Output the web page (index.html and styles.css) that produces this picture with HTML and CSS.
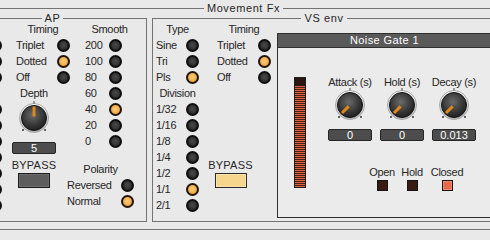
FILE: index.html
```html
<!DOCTYPE html>
<html lang="en">
<head>
    <meta charset="UTF-8">
    <title>Movement Fx</title>
    <link rel="stylesheet" href="styles.css">
</head>
<body>
    <fieldset class="group outer">
        <legend>Movement Fx</legend>
        <div class="fx-row">

            <!-- AP (its first column is scrolled off the left edge) -->
            <fieldset class="group ap">
                <legend>AP</legend>
                <div class="cols">
                    <div class="col col-type">
                        <div class="head"></div>
                        <div class="opt"><span></span><i class="led"></i></div>
                        <div class="opt"><span></span><i class="led"></i></div>
                        <div class="opt"><span></span><i class="led"></i></div>
                        <div class="head"></div>
                        <div class="opt"><span></span><i class="led"></i></div>
                        <div class="opt"><span></span><i class="led"></i></div>
                        <div class="opt"><span></span><i class="led"></i></div>
                        <div class="opt"><span></span><i class="led"></i></div>
                        <div class="opt"><span></span><i class="led"></i></div>
                        <div class="opt"><span></span><i class="led"></i></div>
                        <div class="opt"><span></span><i class="led"></i></div>
                    </div>
                    <div class="col col-timing ap-timing">
                        <div class="opts">
                            <div class="head">Timing</div>
                            <div class="opt"><span>Triplet</span><i class="led"></i></div>
                            <div class="opt"><span>Dotted</span><i class="led on"></i></div>
                            <div class="opt"><span>Off</span><i class="led"></i></div>
                        </div>
                        <div class="depth">
                            <div class="head">Depth</div>
                            <svg class="knob" viewBox="0 0 34 34" width="34" height="34">
                                <defs>
                                    <radialGradient id="knobBody" cx="45%" cy="38%" r="65%">
                                        <stop offset="0" stop-color="#6b6b6b"/>
                                        <stop offset="0.6" stop-color="#393939"/>
                                        <stop offset="1" stop-color="#1c1c1c"/>
                                    </radialGradient>
                                    <linearGradient id="knobRing" x1="0" y1="0" x2="0" y2="1">
                                        <stop offset="0" stop-color="#fdfdfd"/>
                                        <stop offset="1" stop-color="#b4b4b4"/>
                                    </linearGradient>
                                </defs>
                                <circle cx="17" cy="17" r="14.5" fill="url(#knobRing)" stroke="#a8a8a8"/>
                                <circle cx="17" cy="17" r="12.5" fill="url(#knobBody)" stroke="#141414"/>
                                <line x1="17" y1="0" x2="17" y2="2.5" stroke="#444"/>
                                <circle cx="6" cy="29" r="1" fill="#333"/>
                                <circle cx="28" cy="29" r="1" fill="#333"/>
                                <line x1="17" y1="15.5" x2="17" y2="5.5" stroke="#e0871c" stroke-width="3"/>
                            </svg>
                            <div class="value">5</div>
                            <div class="bypass-label">BYPASS</div>
                            <div class="bypass"></div>
                        </div>
                    </div>
                    <div class="col col-smooth">
                        <div class="head">Smooth</div>
                        <div class="opt"><span>200</span><i class="led"></i></div>
                        <div class="opt"><span>100</span><i class="led"></i></div>
                        <div class="opt"><span>80</span><i class="led"></i></div>
                        <div class="opt"><span>60</span><i class="led"></i></div>
                        <div class="opt"><span>40</span><i class="led on"></i></div>
                        <div class="opt"><span>20</span><i class="led"></i></div>
                        <div class="opt"><span>0</span><i class="led"></i></div>
                        <div class="polarity">
                            <div class="head">Polarity</div>
                            <div class="opt"><span>Reversed</span><i class="led"></i></div>
                            <div class="opt"><span>Normal</span><i class="led on"></i></div>
                        </div>
                    </div>
                </div>
            </fieldset>

            <!-- VS env -->
            <fieldset class="group vs">
                <legend>VS env</legend>
                <div class="vs-row">
                    <div class="cols">
                        <div class="col col-type">
                            <div class="head">Type</div>
                            <div class="opt"><span>Sine</span><i class="led"></i></div>
                            <div class="opt"><span>Tri</span><i class="led"></i></div>
                            <div class="opt"><span>Pls</span><i class="led on"></i></div>
                            <div class="head">Division</div>
                            <div class="opt"><span>1/32</span><i class="led"></i></div>
                            <div class="opt"><span>1/16</span><i class="led"></i></div>
                            <div class="opt"><span>1/8</span><i class="led"></i></div>
                            <div class="opt"><span>1/4</span><i class="led"></i></div>
                            <div class="opt"><span>1/2</span><i class="led"></i></div>
                            <div class="opt"><span>1/1</span><i class="led on"></i></div>
                            <div class="opt"><span>2/1</span><i class="led"></i></div>
                        </div>
                        <div class="col col-timing vs-timing">
                            <div class="opts">
                                <div class="head">Timing</div>
                                <div class="opt"><span>Triplet</span><i class="led"></i></div>
                                <div class="opt"><span>Dotted</span><i class="led on"></i></div>
                                <div class="opt"><span>Off</span><i class="led"></i></div>
                            </div>
                            <div class="vs-bypass">
                                <div class="bypass-label">BYPASS</div>
                                <div class="bypass on"></div>
                            </div>
                        </div>
                    </div>

                    <div class="gate">
                        <div class="gate-title">Noise Gate 1</div>
                        <div class="gate-body">
                            <div class="meter"></div>
                            <div class="gate-controls">
                                <div class="knobs">
                                    <div class="knob-cell">
                                        <div class="knob-label">Attack (s)</div>
                                        <svg class="knob" viewBox="0 0 34 34" width="34" height="34">
                                            <circle cx="17" cy="17" r="14.5" fill="url(#knobRing)" stroke="#a8a8a8"/>
                                            <circle cx="17" cy="17" r="12.5" fill="url(#knobBody)" stroke="#141414"/>
                                            <line x1="17" y1="0" x2="17" y2="2.5" stroke="#444"/>
                                            <circle cx="6" cy="29" r="1" fill="#333"/>
                                            <circle cx="28" cy="29" r="1" fill="#333"/>
                                            <line x1="15.6" y1="18.4" x2="9" y2="25" stroke="#e0871c" stroke-width="3"/>
                                        </svg>
                                        <div class="value">0</div>
                                    </div>
                                    <div class="knob-cell">
                                        <div class="knob-label">Hold (s)</div>
                                        <svg class="knob" viewBox="0 0 34 34" width="34" height="34">
                                            <circle cx="17" cy="17" r="14.5" fill="url(#knobRing)" stroke="#a8a8a8"/>
                                            <circle cx="17" cy="17" r="12.5" fill="url(#knobBody)" stroke="#141414"/>
                                            <line x1="17" y1="0" x2="17" y2="2.5" stroke="#444"/>
                                            <circle cx="6" cy="29" r="1" fill="#333"/>
                                            <circle cx="28" cy="29" r="1" fill="#333"/>
                                            <line x1="15.6" y1="18.4" x2="9" y2="25" stroke="#e0871c" stroke-width="3"/>
                                        </svg>
                                        <div class="value">0</div>
                                    </div>
                                    <div class="knob-cell">
                                        <div class="knob-label">Decay (s)</div>
                                        <svg class="knob" viewBox="0 0 34 34" width="34" height="34">
                                            <circle cx="17" cy="17" r="14.5" fill="url(#knobRing)" stroke="#a8a8a8"/>
                                            <circle cx="17" cy="17" r="12.5" fill="url(#knobBody)" stroke="#141414"/>
                                            <line x1="17" y1="0" x2="17" y2="2.5" stroke="#444"/>
                                            <circle cx="6" cy="29" r="1" fill="#333"/>
                                            <circle cx="28" cy="29" r="1" fill="#333"/>
                                            <line x1="15.6" y1="18.4" x2="9" y2="25" stroke="#e0871c" stroke-width="3"/>
                                        </svg>
                                        <div class="value">0.013</div>
                                    </div>
                                </div>
                                <div class="states">
                                    <div class="state open"><span>Open</span><i class="lamp"></i></div>
                                    <div class="state hold"><span>Hold</span><i class="lamp"></i></div>
                                    <div class="state closed"><span>Closed</span><i class="lamp on"></i></div>
                                </div>
                            </div>
                        </div>
                    </div>
                </div>
            </fieldset>

        </div>
    </fieldset>
</body>
</html>
```

FILE: styles.css
```css
/* Global */
html, body {
    overflow: hidden;
}
body {
    margin: 0;
    background-color: #e9e9e9;
    color: #262626;
    font-family: 'Liberation Sans', Arial, sans-serif;
    font-size: 11px;
    line-height: 16px;
    letter-spacing: -0.3px;
}

/* Group boxes */
.group {
    margin: 0;
    padding: 0;
    min-width: 0;
    box-sizing: border-box;
    border: 1px solid #737373;
}
.group > legend {
    margin: 0 auto;
    padding: 0 3px;
    line-height: 10px;
    letter-spacing: 0.6px;
}
.outer {
    margin: 3px 0 0 -50px;
    width: 583px;
    padding: 0 0 7px 4px;
}
.fx-row {
    display: flex;
}
.ap {
    width: 192px;
    height: 209px;
    padding-left: 3px;
}
.vs {
    width: 341px;
    height: 209px;
    margin-left: 5px;
    padding-left: 3px;
}

/* Columns of options */
.cols {
    display: flex;
    align-items: flex-start;
    margin-top: -2px;
}
.col {
    display: flex;
    flex-direction: column;
}
.head {
    height: 16px;
    text-align: center;
    white-space: nowrap;
}
.opt {
    display: flex;
    align-items: center;
    height: 16px;
    white-space: nowrap;
}
.col-type .opt span { width: 30px; }
.col-timing .opt span { width: 41px; }
.col-smooth .opt span { width: 24px; }
.polarity .opt span { width: 54px; }

.ap-timing {
    width: 58px;
    margin-left: 10px;
}
.ap-timing .opts {
    padding-left: 4px;
}
.col-smooth {
    margin-left: 15px;
}
.polarity {
    margin: 12px 0 0 -18px;
}
.vs-timing {
    margin-left: 18px;
}

/* LEDs */
.led {
    flex: none;
    width: 13px;
    height: 13px;
    box-sizing: border-box;
    border-radius: 50%;
    border: 2px solid #0f0f0f;
    background: radial-gradient(circle at 50% 45%, #4a4a4a, #2b2b2b 75%);
}
.led.on {
    border-color: #1f1406;
    background: radial-gradient(circle at 50% 45%, #ffcf7a, #eea43f 75%);
}

/* Depth */
.depth {
    width: 44px;
    display: flex;
    flex-direction: column;
    align-items: center;
}
.knob {
    display: block;
}
.value {
    width: 44px;
    height: 12px;
    box-sizing: border-box;
    margin-top: 7px;
    background: #4d4d4d;
    border: 1px solid #262626;
    border-radius: 2px;
    color: #fff;
    line-height: 10px;
    text-align: center;
    letter-spacing: 0;
}
.bypass-label {
    margin-top: 5px;
    line-height: 12px;
    text-align: center;
    letter-spacing: 0.2px;
}
.bypass {
    width: 32px;
    height: 15px;
    box-sizing: border-box;
    margin-top: 2px;
    background: #5d5d5d;
    border: 1px solid #1c1c1c;
    box-shadow: inset 0 0 0 1px #6c6c6c;
}
.bypass.on {
    background: #f6d58c;
    border-color: #2a2a2a;
    box-shadow: inset 0 0 0 1px #fbe4ae;
}
.vs-bypass {
    width: 33px;
    margin: 69px 0 0 -3px;
    display: flex;
    flex-direction: column;
    align-items: center;
}

/* Noise gate panel */
.vs-row {
    display: flex;
    align-items: flex-start;
}
.gate {
    width: 216px;
    height: 185px;
    box-sizing: border-box;
    margin: 10px 0 0 6px;
    border: 1px solid #2f2f2f;
    background: #ebebeb;
}
.gate-title {
    height: 13px;
    line-height: 13px;
    background: #5a5a5a;
    border-bottom: 1px solid #2f2f2f;
    color: #fff;
    text-align: center;
    letter-spacing: 0.4px;
}
.gate-body {
    display: flex;
    align-items: flex-start;
}
.meter {
    width: 12px;
    height: 111px;
    box-sizing: border-box;
    margin: 29px 0 0 16px;
    border: 1px solid #1e1e1e;
    background:
        linear-gradient(#2a1612, #2a1612) top / 100% 8px no-repeat,
        repeating-linear-gradient(#dd5f3c 0 1px, #4a2219 1px 2px);
}
.gate-controls {
    margin: 28px 0 0 22px;
}
.knobs {
    display: flex;
    gap: 8px;
}
.knob-cell {
    width: 44px;
    display: flex;
    flex-direction: column;
    align-items: center;
}
.knob-label {
    line-height: 12px;
    white-space: nowrap;
}
.states {
    display: flex;
    gap: 6px;
    margin: 25px 0 0 42px;
}
.state {
    width: 24px;
    display: flex;
    flex-direction: column;
    align-items: center;
    line-height: 12px;
}
.state.closed {
    width: 34px;
}
.lamp {
    width: 11px;
    height: 11px;
    box-sizing: border-box;
    margin-top: 2px;
    border: 1px solid #141414;
    background: #3b1a12;
}
.lamp.on {
    background: #e8684c;
    box-shadow: inset 0 0 0 1px #f08a70;
}
```
